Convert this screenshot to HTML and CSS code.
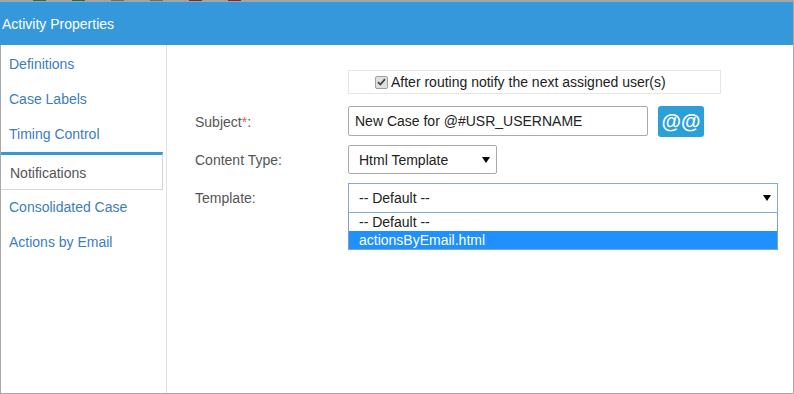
FILE: index.html
```html
<!DOCTYPE html>
<html lang="en">
<head>
    <meta charset="UTF-8">
    <title>Activity Properties</title>
    <link rel="stylesheet" href="styles.css">
</head>
<body>
    <div class="window">
        <!-- bottoms of toolbar icons above the dialog -->
        <div class="top-strip">
            <span class="mark green"></span>
            <span class="mark green"></span>
            <span class="mark grey"></span>
            <span class="mark grey"></span>
            <span class="mark red"></span>
            <span class="mark red"></span>
        </div>

        <div class="header">Activity Properties</div>

        <div class="body">
            <!-- Tabs -->
            <ul class="tabs">
                <li class="tab">Definitions</li>
                <li class="tab">Case Labels</li>
                <li class="tab">Timing Control</li>
                <li class="tab active">Notifications</li>
                <li class="tab">Consolidated Case</li>
                <li class="tab">Actions by Email</li>
            </ul>

            <!-- Notification form -->
            <div class="form">
                <div class="row row-check">
                    <div class="label"></div>
                    <div class="check-box">
                        <span class="checkbox">
                            <svg width="9" height="8" viewBox="0 0 9 8"><path d="M1 4.2 L3.4 6.5 L8 1.2" fill="none" stroke="#444" stroke-width="1.8"/></svg>
                        </span>
                        After routing notify the next assigned user(s)
                    </div>
                </div>

                <div class="row row-subject">
                    <div class="label">Subject<span class="req">*</span>:</div>
                    <div class="controls">
                        <div class="input">New Case for @#USR_USERNAME</div>
                        <button class="btn-vars">@@</button>
                    </div>
                </div>

                <div class="row row-type">
                    <div class="label">Content Type:</div>
                    <div class="select select-type">
                        <span>Html Template</span>
                        <svg width="8" height="6" viewBox="0 0 8 6"><path d="M0 0 H8 L4 6 Z" fill="#000"/></svg>
                    </div>
                </div>

                <div class="row row-template">
                    <div class="label">Template:</div>
                    <div class="select-wrap">
                        <div class="select select-template focus">
                            <span>-- Default --</span>
                            <svg width="8" height="6" viewBox="0 0 8 6"><path d="M0 0 H8 L4 6 Z" fill="#000"/></svg>
                        </div>
                        <ul class="dropdown">
                            <li class="option">-- Default --</li>
                            <li class="option selected">actionsByEmail.html</li>
                        </ul>
                    </div>
                </div>
            </div>
        </div>
    </div>
</body>
</html>
```

FILE: styles.css
```css
/* General */
body {
    margin: 0;
    padding: 0;
    font-family: 'Liberation Sans', Arial, sans-serif;
    font-size: 14px;
    color: #333;
    background: #fff;
}

.window {
    height: 394px;
    box-sizing: border-box;
    border-left: 1px solid #a9a9a9;
    border-right: 1px solid #a9a9a9;
    border-bottom: 1px solid #a9a9a9;
    display: flex;
    flex-direction: column;
}

/* Top strip */
.top-strip {
    height: 2px;
    background: #a4a4a4;
    display: flex;
    gap: 26px;
    padding-left: 32px;
}

.mark {
    width: 13px;
    height: 1px;
}

.mark.green { background: #2e6b55; }
.mark.grey { background: #6d6d6d; }
.mark.red { background: #7a2a3a; }

/* Header */
.header {
    height: 43px;
    line-height: 45px;
    background: #3498db;
    color: #fff;
    padding-left: 2px;
    margin-left: -1px;
}

.body {
    flex: 1;
    display: flex;
}

/* Tabs */
.tabs {
    list-style: none;
    margin: 0;
    padding: 2px 0 0 0;
    width: 165px;
    border-right: 1px solid #dde3ea;
}

.tab {
    height: 35px;
    line-height: 35px;
    padding-left: 8px;
    color: #3b7dc0;
}

.tab.active {
    height: 34px;
    line-height: 36px;
    margin-right: 3px;
    padding-left: 9px;
    border-top: 3px solid #3498db;
    border-right: 1px solid #d6d6d6;
    border-bottom: 1px solid #d6d6d6;
    color: #555;
}

/* Form */
.form {
    flex: 1;
    padding: 25px 0 0 28px;
}

.row {
    display: flex;
    align-items: center;
}

.label {
    width: 153px;
    color: #555;
}

.req {
    color: #e55;
}

.row-check {
    margin-bottom: 12px;
}

.check-box {
    width: 345px;
    height: 22px;
    padding-left: 26px;
    border: 1px solid #e6e6e6;
    display: flex;
    align-items: center;
    gap: 3px;
    color: #222;
}

.checkbox {
    width: 11px;
    height: 11px;
    border: 1px solid #a0a0a0;
    border-radius: 2px;
    background: #e0e0e0;
    display: flex;
    align-items: center;
    justify-content: center;
}

.row-subject {
    margin-bottom: 8px;
}

.controls {
    display: flex;
    align-items: flex-start;
    gap: 10px;
}

.input {
    width: 292px;
    height: 28px;
    line-height: 28px;
    padding-left: 6px;
    border: 1px solid #aaa;
    border-radius: 2px;
    color: #222;
}

.btn-vars {
    width: 46px;
    height: 31px;
    border: none;
    border-radius: 3px;
    background: #2a9fd8;
    color: #fff;
    font-family: 'Liberation Sans', Arial, sans-serif;
    font-size: 20px;
    font-weight: bold;
    padding: 0;
}

.row-type {
    margin-bottom: 9px;
}

/* Selects */
.select {
    box-sizing: border-box;
    display: flex;
    align-items: center;
    justify-content: space-between;
    padding: 0 6px 0 10px;
    border: 1px solid #aaa;
    border-radius: 2px;
    color: #222;
}

.select-type {
    width: 149px;
    height: 29px;
}

.select-wrap {
    position: relative;
}

.select-template {
    width: 430px;
    height: 30px;
}

.select.focus {
    border-color: #86a9dc;
    border-radius: 0;
}

/* Dropdown list */
.dropdown {
    position: absolute;
    top: 30px;
    left: 0;
    width: 430px;
    box-sizing: border-box;
    margin: 0;
    padding: 0;
    list-style: none;
    border: 1px solid #7f9fd4;
    border-top: none;
    background: #fff;
}

.option {
    height: 18px;
    line-height: 18px;
    padding-left: 10px;
    color: #222;
}

.option.selected {
    background: #1e90ff;
    color: #fff;
}
```
